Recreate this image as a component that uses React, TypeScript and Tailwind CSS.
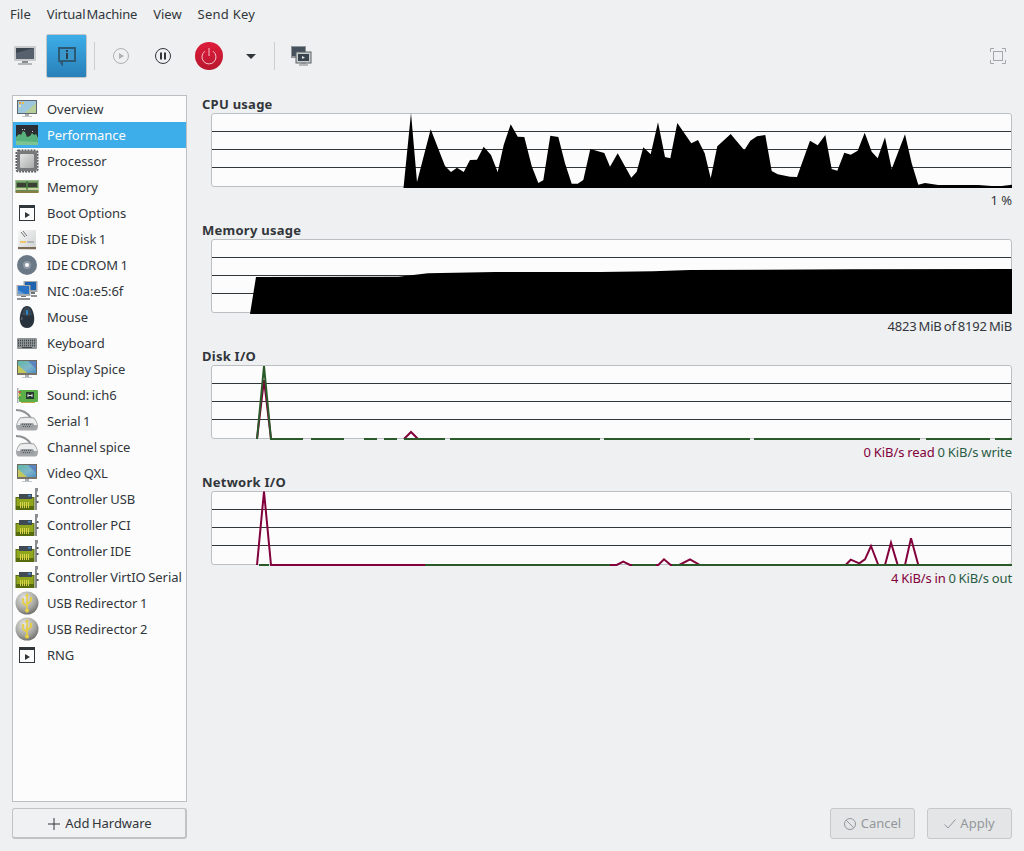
import React from "react";

const Monitor = ({ id }: { id: string }) => (
  <svg width="24" height="24" viewBox="0 0 24 24">
    <defs>
      <linearGradient id={id} x1="0" y1="0" x2="1" y2="1">
        <stop offset="0" stopColor="#5fb7a6" />
        <stop offset="0.55" stopColor="#7fb7c9" />
        <stop offset="1" stopColor="#4f8fc4" />
      </linearGradient>
    </defs>
    <rect x="2" y="3" width="20" height="15" fill="#6e6a60" />
    <rect x="3" y="4" width="18" height="12" fill={`url(#${id})`} />
    <polygon points="3,16 3,8 12,16" fill="#c2c85a" />
    <polygon points="21,4 13,4 21,12" fill="#5d86c0" />
    <rect x="2" y="16" width="20" height="2" fill="#77736a" />
    <rect x="10" y="18" width="4" height="2" fill="#a9adb0" />
    <rect x="7" y="20" width="10" height="1" fill="#c4c7c9" />
  </svg>
);

const Overview = () => (
  <svg width="24" height="24" viewBox="0 0 24 24">
    <rect x="2" y="3" width="20" height="14" fill="#5e6770" />
    <rect x="3" y="4" width="18" height="12" fill="#9cc7dc" />
    <polygon points="10,16 21,6 21,16" fill="#b8cf9a" />
    <rect x="4" y="5" width="2" height="2" fill="#ef9a3c" />
    <rect x="7" y="5" width="2" height="2" fill="#e8c24a" />
    <rect x="4" y="8" width="2" height="2" fill="#e8e0a8" />
    <rect x="10" y="17" width="4" height="2" fill="#a9adb0" />
    <rect x="7" y="19" width="10" height="1" fill="#c4c7c9" />
  </svg>
);

const Performance = () => (
  <svg width="24" height="24" viewBox="0 0 24 24">
    <rect x="1" y="2" width="22" height="20" fill="#2b2f33" />
    <polygon points="1,22 1,14 4,11 6,12 8,8 10,9 12,14 15,13 17,10 19,12 21,11 23,15 23,22" fill="#58b07c" />
    <polygon points="1,22 1,18 23,19 23,22" fill="#7cc592" />
    <rect x="7" y="6" width="1" height="1" fill="#cfd3d5" />
    <rect x="9" y="6" width="1" height="1" fill="#cfd3d5" />
    <rect x="17" y="8" width="1" height="1" fill="#cfd3d5" />
  </svg>
);

const Processor = () => (
  <svg width="24" height="24" viewBox="0 0 24 24">
    <defs>
      <linearGradient id="cpu" x1="0" y1="0" x2="1" y2="1">
        <stop offset="0" stopColor="#e4e5e5" />
        <stop offset="1" stopColor="#a9abab" />
      </linearGradient>
    </defs>
    <rect x="1.5" y="1.5" width="21" height="21" rx="2" fill="none" stroke="#5a5d60" strokeWidth="2" strokeDasharray="2 1" />
    <rect x="2" y="2" width="20" height="20" rx="2" fill="#77797b" />
    <rect x="5" y="5" width="14" height="14" rx="1" fill="url(#cpu)" />
  </svg>
);

const Memory = () => (
  <svg width="24" height="24" viewBox="0 0 24 24">
    <rect x="0.5" y="5" width="23" height="12" fill="#5f8f52" />
    <rect x="0.5" y="5" width="23" height="1.5" fill="#9ab98b" />
    <rect x="2" y="8" width="9" height="4" fill="#3b3f36" />
    <rect x="13" y="8" width="9" height="4" fill="#3b3f36" />
    <rect x="0.5" y="13" width="23" height="2" fill="#c7d0a0" />
    <rect x="0.5" y="16" width="23" height="2" fill="#8a7d44" />
    <rect x="11.5" y="6" width="1" height="9" fill="#2f6d35" />
  </svg>
);

const Boot = () => (
  <svg width="24" height="24" viewBox="0 0 24 24">
    <rect x="4.5" y="4.5" width="15" height="15" fill="#fcfcfc" stroke="#31363b" />
    <rect x="4" y="4" width="16" height="3" fill="#31363b" />
    <polygon points="10,11 10,17 15,14" fill="#31363b" />
  </svg>
);

const Disk = () => (
  <svg width="24" height="24" viewBox="0 0 24 24">
    <defs>
      <linearGradient id="hd" x1="0" y1="0" x2="1" y2="1">
        <stop offset="0" stopColor="#f7f7f7" />
        <stop offset="1" stopColor="#cfd1d2" />
      </linearGradient>
    </defs>
    <rect x="3" y="3" width="18" height="20" fill="url(#hd)" />
    <path d="M6 5l4 5M8 4l4 5" stroke="#6f7478" strokeWidth="1" />
    <rect x="5" y="14" width="6" height="2" fill="#efc66a" />
    <rect x="12" y="14" width="7" height="2" fill="#b4b6b8" />
    <rect x="3" y="20" width="18" height="2" fill="#7c6a55" />
  </svg>
);

const Cdrom = () => (
  <svg width="24" height="24" viewBox="0 0 24 24">
    <circle cx="12" cy="12" r="10" fill="#6b7886" />
    <circle cx="12" cy="12" r="4" fill="#8f9aa6" />
    <circle cx="12" cy="12" r="2" fill="#fcfcfc" />
  </svg>
);

const Nic = () => (
  <svg width="24" height="24" viewBox="0 0 24 24">
    <rect x="8.5" y="2" width="14" height="11" fill="#a4a8ab" />
    <rect x="10" y="3" width="11" height="8" fill="#1f62ad" />
    <rect x="16" y="13" width="4" height="2" fill="#6f7376" />
    <rect x="1.5" y="6" width="14" height="11" fill="#a9adb0" />
    <rect x="3" y="7" width="11" height="8" fill="#2b74c4" />
    <polygon points="3,15 3,11 10,15" fill="#5f9bd8" />
    <rect x="6" y="17" width="5" height="1" fill="#6f7376" />
    <rect x="2" y="19" width="13" height="2" fill="#8f9396" />
    <rect x="16" y="16" width="6" height="2" fill="#8f9396" />
  </svg>
);

const Mouse = () => (
  <svg width="24" height="24" viewBox="0 0 24 24">
    <path d="M12 1C8 1 6 5 5 11c-1 6 1 12 7 12s8-6 7-12C18 5 16 1 12 1z" fill="#28333e" />
    <path d="M12 2c-3 0-4 3-5 8 2 1 8 1 10 0-1-5-2-8-5-8z" fill="#3a4856" />
    <rect x="11" y="5" width="2" height="5" rx="1" fill="#2e86c9" />
    <rect x="6" y="12" width="1.5" height="3" fill="#55616c" />
  </svg>
);

const Keyboard = () => (
  <svg width="24" height="24" viewBox="0 0 24 24">
    <rect x="2" y="7" width="20" height="11" rx="1" fill="#8f9596" />
    <g stroke="#3f4546" strokeWidth="1.5" strokeDasharray="1 1">
      <line x1="3" y1="9.5" x2="21" y2="9.5" />
      <line x1="3" y1="12" x2="21" y2="12" />
      <line x1="3" y1="14.5" x2="21" y2="14.5" />
    </g>
    <rect x="7" y="16" width="10" height="1" fill="#3f4546" />
  </svg>
);

const Sound = () => (
  <svg width="24" height="24" viewBox="0 0 24 24">
    <rect x="2" y="5" width="1.5" height="15" fill="#a9adb0" />
    <rect x="4" y="7" width="19" height="12" rx="1" fill="#5cae48" />
    <rect x="3.5" y="8" width="2" height="2" fill="#d8493f" />
    <rect x="3.5" y="11" width="2" height="2" fill="#e2c33c" />
    <rect x="3.5" y="14" width="2" height="2" fill="#4d9e46" />
    <rect x="11" y="9" width="8" height="7" fill="#2a3a33" />
    <path d="M13 11v3M17 11v3M13 12.5h4" stroke="#d7e0dc" strokeWidth="1" />
    <rect x="6" y="19" width="14" height="1" fill="#c0a944" />
  </svg>
);

const Serial = () => (
  <svg width="24" height="24" viewBox="0 0 24 24">
    <path d="M1 1c6 0 11 2 15 8" fill="none" stroke="#8f9294" strokeWidth="2" />
    <path d="M5 8.5c-2 2-3.500 5-4 8 0 3 1 5 3 5h16c2 0 3-2 3-5-.5-3-2-6-4-8-2-1-12-1-14 0z" fill="#a4a7a9" />
    <path d="M5.500 9.500c-2 2-3 4-3.500 6.500h20c-.5-2.500-1.500-4.500-3.500-6.500-2-.7-11-.7-13 0z" fill="#eceded" />
    <rect x="5" y="14" width="14" height="5" rx="2" fill="#9a9da0" />
    <path d="M7 15.500h10M8 17.500h8" stroke="#565a5d" strokeWidth="1" strokeDasharray="1 1" />
  </svg>
);

const Controller = () => (
  <svg width="24" height="24" viewBox="0 0 24 24">
    <path d="M20 1h3v3l-1 1v18h-2z" fill="#8a8d8f" />
    <rect x="21.5" y="8" width="2" height="2" fill="#55595c" />
    <rect x="21.5" y="14" width="2" height="2" fill="#55595c" />
    <rect x="0.5" y="10" width="19" height="13" fill="#566a10" />
    <rect x="1.5" y="11" width="17" height="8" fill="#8fa61d" />
    <rect x="4" y="7" width="13" height="5" fill="#3f4a52" />
    <rect x="13" y="8" width="3" height="1.5" fill="#4b8fd0" />
    <g stroke="#dcd24a" strokeWidth="1">
      <line x1="5.5" y1="15" x2="5.5" y2="21" />
      <line x1="7.5" y1="15" x2="7.5" y2="21" />
      <line x1="9.5" y1="15" x2="9.5" y2="21" />
      <line x1="11.5" y1="15" x2="11.5" y2="21" />
      <line x1="13.5" y1="15" x2="13.5" y2="21" />
    </g>
  </svg>
);

const Usb = () => (
  <svg width="24" height="24" viewBox="0 0 24 24">
    <defs>
      <radialGradient id="usb" cx="0.4" cy="0.3" r="0.8">
        <stop offset="0" stopColor="#e8e8e6" />
        <stop offset="0.6" stopColor="#a3a3a0" />
        <stop offset="1" stopColor="#5d5d5a" />
      </radialGradient>
    </defs>
    <circle cx="12" cy="12" r="11.5" fill="url(#usb)" />
    <path d="M12 3v16M12 15l-4-3V9M12 13l4-3V8" fill="none" stroke="#e6cf45" strokeWidth="1.6" />
    <polygon points="12,2 10,5 14,5" fill="#e6cf45" />
    <circle cx="12" cy="19.5" r="2" fill="#e6cf45" />
    <rect x="6.8" y="7" width="2.4" height="2.4" rx="1.2" fill="#e6cf45" />
    <rect x="14.8" y="6" width="2.4" height="2.4" fill="#e6cf45" />
  </svg>
);

const rows: [string, React.ReactNode][] = [
  ["Overview", <Overview />],
  ["Performance", <Performance />],
  ["Processor", <Processor />],
  ["Memory", <Memory />],
  ["Boot Options", <Boot />],
  ["IDE Disk 1", <Disk />],
  ["IDE CDROM 1", <Cdrom />],
  ["NIC :0a:e5:6f", <Nic />],
  ["Mouse", <Mouse />],
  ["Keyboard", <Keyboard />],
  ["Display Spice", <Monitor id="d1" />],
  ["Sound: ich6", <Sound />],
  ["Serial 1", <Serial />],
  ["Channel spice", <Serial />],
  ["Video QXL", <Monitor id="d2" />],
  ["Controller USB", <Controller />],
  ["Controller PCI", <Controller />],
  ["Controller IDE", <Controller />],
  ["Controller VirtIO Serial", <Controller />],
  ["USB Redirector 1", <Usb />],
  ["USB Redirector 2", <Usb />],
  ["RNG", <Boot />],
];

const CPU =
  "403.5,188 411,113 417,182 430.7,129.3 445,166 451,172 457,167.7 463.7,172 470,160 477,159.7 483.7,146.7 491,155 497.7,172 503.7,145 510.7,124.3 517.7,136.7 524.3,137 531.7,166 538.3,183 543.3,180.3 550.3,135.7 558.3,137 565,163.3 571.7,183.7 577.7,183.7 583.3,180 590.3,149 604.3,153 610,166.7 617.7,153.3 631.3,177.7 636.7,171.7 643.3,147.3 650.7,154.3 658,122.3 665,157 670.3,158.3 677.3,123 691.3,143.3 698,140 704.7,153.3 710.7,178.3 717.3,146.3 730.7,134 744.3,150.3 750.3,140.7 757,136.3 765.3,135 771.7,171 777.7,174.3 790,176.7 797,177 810,140.7 817.7,145.3 825.3,135 831.7,169 837.3,170.7 844.3,152.7 850.7,154.7 857.7,150.7 864.7,132.7 871.7,151.7 877.7,158.3 885,137.3 891.7,169 905,134.3 911.7,163.3 918.3,184.7 925,183 938.3,185 978.3,185 991.7,186 1001.7,186 1012,184.7 1012,188";
const MEM =
  "250,314 256,277 398.3,276.7 428,273.3 495,272 600,272 653,271.3 690,270 853,269.3 1012,269 1012,314";
const NET_IN =
  "257,565 264,491.5 271,565 616.7,565 623.3,561.7 630,565 658.3,565 664,559.3 670.7,565 679.3,565 690,559.3 700,565 845.7,565 850.7,559.7 859.3,563.3 865,559.3 871,546 878.3,565 885,565 891,542.7 897.7,565 905,565 911,538.3 918.3,565 1012,565";

const Lines = ({ y }: { y: number }) => (
  <g stroke="#31363b" strokeWidth="1">
    {[18.5, 36.5, 54.5].map((d) => (
      <line key={d} x1="212" x2="1011" y1={y + d} y2={y + d} />
    ))}
  </g>
);

const Chart = ({
  title,
  top,
  label,
  children,
}: {
  title: string;
  top: number;
  label: React.ReactNode;
  children: React.ReactNode;
}) => (
  <div className="flex h-[126px] flex-col">
    <div className="h-[18px] text-[13px] leading-[18px] font-bold tracking-[0.25px] text-[#31363b]">{title}</div>
    <div className="ml-[9px] h-[74px] w-[801px] rounded-[3px] border border-[#bdc0c3] bg-[#fcfcfc]">
      <svg width="799" height="72" viewBox={`212 ${top + 1} 799 72`} className="block overflow-visible">
        <Lines y={top} />
        {children}
      </svg>
    </div>
    <div className="h-[26px] text-right text-[13px] leading-[26px] text-[#31363b]">{label}</div>
  </div>
);

const Sep = () => <div className="h-[28px] w-px bg-[#cdced0]" />;

export default function App() {
  return (
    <div className="flex h-[851px] w-[1024px] flex-col overflow-hidden bg-[#eff0f1] font-['Noto_Sans',sans-serif] text-[13px] text-[#31363b]">
      <div className="flex h-[30px] items-center pl-[2px]">
        <span className="px-[8px]">File</span>
        <span className="px-[8px] tracking-[-0.2px] [word-spacing:-2px]">Virtual Machine</span>
        <span className="px-[8px]">View</span>
        <span className="px-[8px] tracking-[0.25px]">Send Key</span>
      </div>

      <div className="flex h-[52px] items-center">
        <div className="ml-[4px] flex h-[44px] w-[41px] items-center justify-center">
          <svg width="24" height="22" viewBox="0 0 24 22">
            <rect x="1" y="1" width="22" height="15" rx="1" fill="#c9cbcc" />
            <rect x="3" y="3" width="18" height="11" fill="#3b4550" />
            <polygon points="3,14 3,8 21,3 21,14" fill="#56616d" />
            <rect x="9" y="16" width="6" height="2" fill="#8a8d8f" />
            <rect x="5" y="18" width="14" height="2" fill="#b5b7b9" />
          </svg>
        </div>
        <div className="ml-[1px] flex h-[44px] w-[41px] items-center justify-center rounded-[2px] border border-[#c0c4c7] bg-gradient-to-b from-[#3daee9] to-[#2980b9]">
          <svg width="20" height="20" viewBox="0 0 20 20">
            <path d="M2 2h16v13H5v3l-2-3H2z" fill="#3a97cb" stroke="#2c5a75" strokeWidth="2" />
            <rect x="9" y="4" width="2" height="2" fill="#2c3e4a" />
            <rect x="9" y="7" width="2" height="6" fill="#2c3e4a" />
          </svg>
        </div>
        <div className="ml-[7px]">
          <Sep />
        </div>
        <div className="ml-[5px] flex w-[42px] justify-center">
          <svg width="18" height="18" viewBox="0 0 18 18">
            <circle cx="9" cy="9" r="7.5" fill="none" stroke="#aeb0b2" strokeWidth="1" />
            <polygon points="7,6 7,12 12,9" fill="#aeb0b2" />
          </svg>
        </div>
        <div className="flex w-[42px] justify-center">
          <svg width="18" height="18" viewBox="0 0 18 18">
            <circle cx="9" cy="9" r="7.5" fill="none" stroke="#31363b" strokeWidth="1" />
            <rect x="6" y="5.5" width="2" height="7" fill="#31363b" />
            <rect x="10" y="5.5" width="2" height="7" fill="#31363b" />
          </svg>
        </div>
        <div className="ml-[4px] flex w-[42px] justify-center">
          <svg width="28" height="28" viewBox="0 0 28 28">
            <defs>
              <linearGradient id="pw" x1="0" y1="0" x2="0" y2="1">
                <stop offset="0" stopColor="#dd1c3b" />
                <stop offset="1" stopColor="#b9172e" />
              </linearGradient>
            </defs>
            <circle cx="14" cy="14" r="14" fill="url(#pw)" />
            <path d="M10 9.2a7 7 0 1 0 8 0" fill="none" stroke="#f3c3ca" strokeWidth="1" />
            <line x1="14" y1="6" x2="14" y2="14" stroke="#f3c3ca" strokeWidth="1" />
          </svg>
        </div>
        <div className="flex w-[42px] justify-center">
          <svg width="10" height="5" viewBox="0 0 10 5">
            <polygon points="0,0 10,0 5,5" fill="#31363b" />
          </svg>
        </div>
        <div className="ml-[2px]">
          <Sep />
        </div>
        <div className="ml-[5px] flex w-[42px] justify-center">
          <svg width="22" height="22" viewBox="0 0 22 22">
            <rect x="1" y="1" width="15" height="12" fill="#8f9598" />
            <rect x="2" y="2" width="13" height="9" fill="#45515c" />
            <rect x="6" y="7" width="15" height="11" fill="#c9cccd" stroke="#5b6166" strokeWidth="1" />
            <rect x="8" y="9" width="11" height="7" fill="#39444f" />
            <polygon points="12,11 12,14 15,12.5" fill="#e4e6e7" />
            <rect x="11" y="18" width="5" height="1" fill="#8a8d8f" />
            <rect x="9" y="19" width="9" height="2" fill="#b5b7b9" />
          </svg>
        </div>
        <div className="ml-auto mr-[18px] flex">
          <svg width="16" height="16" viewBox="0 0 16 16">
            <path d="M0.5 4V0.5H4M12 0.5h3.5V4M15.5 12v3.5H12M4 15.5H0.5V12" fill="none" stroke="#a4a7aa" />
            <rect x="3.5" y="3.5" width="9" height="9" fill="none" stroke="#a4a7aa" />
          </svg>
        </div>
      </div>

      <div className="flex flex-1 px-3 pb-3 pt-[13px]">
        <div className="flex w-[175px] flex-col gap-[6px]">
          <div className="flex-1 border border-[#bdc0c3] bg-[#fcfcfc]">
            {rows.map(([name, icon]) => (
              <div
                key={name}
                className={
                  name === "Performance"
                    ? "flex h-[26px] items-center gap-[8px] whitespace-nowrap bg-[#3daee9] pl-[2px] text-[#fcfcfc]"
                    : "flex h-[26px] items-center gap-[8px] whitespace-nowrap pl-[2px]"
                }
              >
                <span className="flex h-[24px] w-[24px] shrink-0">{icon}</span>
                <span className="mt-[2px] tracking-[-0.05px] [word-spacing:-0.8px]">{name}</span>
              </div>
            ))}
          </div>
          <button className="flex h-[31px] items-center justify-center gap-[5px] rounded-[3px] border border-[#c0c2c4] border-b-2 border-r-2 bg-[#f0f1f2] pt-[1px] pl-[2px] tracking-[-0.05px] [word-spacing:-0.8px]">
            <svg width="12" height="12" viewBox="0 0 12 12">
              <path d="M6 0v12M0 6h12" stroke="#31363b" strokeWidth="1" />
            </svg>
            Add Hardware
          </button>
        </div>

        <div className="ml-[15px] flex flex-1 flex-col">
          <Chart title="CPU usage" top={113} label="1 %">
            <polygon points={CPU} fill="#000" />
          </Chart>
          <Chart
            title="Memory usage"
            top={239}
            label={<span className="tracking-[-0.2px] [word-spacing:-1px]">4823 MiB of 8192 MiB</span>}
          >
            <polygon points={MEM} fill="#000" />
          </Chart>
          <Chart
            title="Disk I/O"
            top={365}
            label={
              <span className="tracking-[-0.05px] [word-spacing:-0.5px]">
                <span className="text-[#82003b]">0 KiB/s read</span>{" "}
                <span className="text-[#295c45]">0 KiB/s write</span>
              </span>
            }
          >
            <g fill="none" strokeWidth="2">
              <polyline points="257,439 264,380 271,439" stroke="#82003b" />
              <polyline points="404,439 411,432 418,439" stroke="#82003b" />
              <polyline points="257,439 264,366 271,439 303,439" stroke="#2a5a2a" />
              <path
                d="M311 439H344M364 439H377M384 439H397M404 439H445M450 439H600M604 439H750M754 439H920M926 439H990M995 439H1012"
                stroke="#2a5a2a"
              />
            </g>
          </Chart>
          <Chart
            title="Network I/O"
            top={491}
            label={
              <span className="tracking-[-0.1px] [word-spacing:-0.5px]">
                <span className="text-[#82003b]">4 KiB/s in</span>{" "}
                <span className="text-[#295c45]">0 KiB/s out</span>
              </span>
            }
          >
            <g fill="none" strokeWidth="2">
              <polyline points={NET_IN} stroke="#82003b" />
              <path d="M259 565H269M425 565H610M632 565H656M672 565H1012" stroke="#2a5a2a" />
            </g>
          </Chart>
          <div className="mt-auto flex justify-end gap-3">
            <button className="flex h-[31px] w-[85px] items-center justify-center gap-[5px] rounded-[3px] border border-[#c6c8ca] bg-[#e3e5e7] text-[#94979a]">
              <svg width="12" height="12" viewBox="0 0 12 12">
                <circle cx="6" cy="6" r="5.5" fill="none" stroke="#94979a" />
                <line x1="2" y1="2" x2="10" y2="10" stroke="#94979a" />
              </svg>
              Cancel
            </button>
            <button className="flex h-[31px] w-[85px] items-center justify-center gap-[4px] rounded-[3px] border border-[#c6c8ca] bg-[#e3e5e7] text-[#94979a]">
              <svg width="12" height="10" viewBox="0 0 12 10">
                <path d="M0.5 5.5L4 9L11.5 0.5" fill="none" stroke="#94979a" />
              </svg>
              Apply
            </button>
          </div>
        </div>
      </div>
    </div>
  );
}
